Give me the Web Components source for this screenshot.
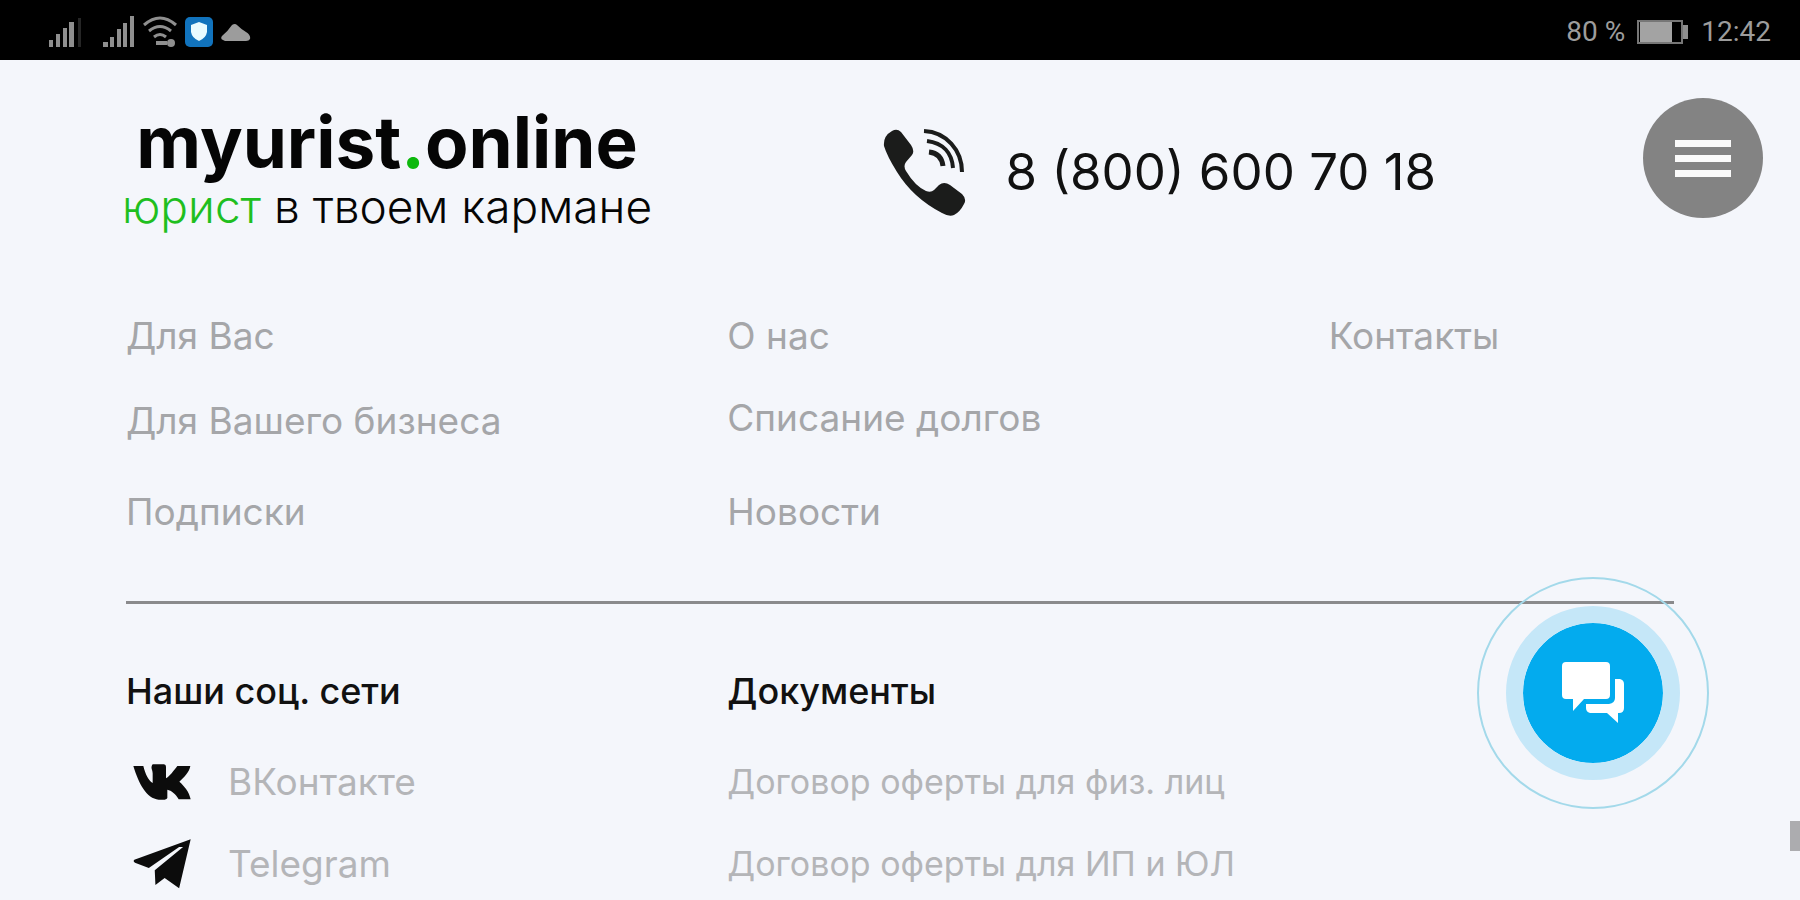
<!DOCTYPE html>
<html lang="ru">
<head>
<meta charset="utf-8">
<meta name="viewport" content="width=device-width, initial-scale=1">
<title>myurist.online</title>
<style>
  body {
    margin: 0;
    min-height: 100vh;
    background: #f4f6fb;
    color: #111;
    font-family: Inter, "Open Sans", sans-serif;
    overflow: hidden;
  }
</style>
</head>
<body>
<status-bar battery="80 %" time="12:42"></status-bar>
<site-header>
  <site-logo slot="logo"></site-logo>
  <phone-link slot="phone" number="8 (800) 600 70 18"></phone-link>
  <menu-button slot="menu"></menu-button>
</site-header>
<site-footer>
  <link-column slot="nav" style="--first-gap: 41px; --second-gap: 47px">
    <text-link href="#you">Для Вас</text-link>
    <text-link href="#business">Для Вашего бизнеса</text-link>
    <text-link href="#plans">Подписки</text-link>
  </link-column>
  <link-column slot="nav" style="--first-gap: 38px; --second-gap: 50px">
    <text-link href="#about">О нас</text-link>
    <text-link href="#debts">Списание долгов</text-link>
    <text-link href="#news">Новости</text-link>
  </link-column>
  <link-column slot="nav">
    <text-link href="#contacts">Контакты</text-link>
  </link-column>

  <link-column slot="info" heading="Наши соц. сети">
    <text-link class="pale" href="#vk" icon="vk">ВКонтакте</text-link>
    <text-link class="pale" href="#telegram" icon="telegram">Telegram</text-link>
  </link-column>
  <link-column slot="info" heading="Документы">
    <text-link class="pale small" href="#offer-person">Договор оферты для физ. лиц</text-link>
    <text-link class="pale small" href="#offer-company">Договор оферты для ИП и ЮЛ</text-link>
  </link-column>
</site-footer>
<chat-button></chat-button>
<scroll-thumb></scroll-thumb>

<script>
class StatusBar extends HTMLElement {
  constructor() {
    super();
    this.attachShadow({ mode: 'open' });
    this.shadowRoot.innerHTML = `
      <style>
        :host {
          display: flex;
          align-items: center;
          justify-content: space-between;
          box-sizing: border-box;
          height: 60px;
          padding: 4px 29px 0 49px;
          background: #000;
          color: #9c9c9c;
          font: 28px/32px Roboto, sans-serif;
        }
        .group { display: flex; align-items: center; }
        .left { gap: 8px; }
        .right { gap: 12px; }
        svg { display: block; }
      </style>
      <div class="group left">
        <svg width="46" height="32" viewBox="0 0 46 32" fill="#8f8f8f">
          <path d="M0 24h4v7H0zM7 18h4v13H7zM14 12h4v19h-4zM20 6h5v25h-5z"/>
          <path d="M29 2h3v29h-3z" fill="#262626"/>
        </svg>
        <svg width="32" height="32" viewBox="0 0 32 32" fill="#8f8f8f">
          <path d="M0 26h5v5H0zM7 21h4v10H7zM14 13h4v18h-4zM20 7h4v24h-4zM27 0h4v31h-4z"/>
        </svg>
        <svg width="34" height="32" viewBox="0 0 34 32" fill="none" stroke="#8f8f8f" stroke-width="3">
          <path d="M1 9Q17-5 33 9M6 15q11-9 22 0M11 21q6-5 12 0"/>
          <path d="M13 27h11" stroke-width="4"/>
          <circle cx="28" cy="27" r="4" fill="#8f8f8f" stroke="none"/>
        </svg>
        <svg width="28" height="32" viewBox="0 0 28 32">
          <rect y="1" width="28" height="30" rx="5" fill="#1173bd"/>
          <path d="M14 6l8 3v7q-1 6-8 9-7-3-8-9V9z" fill="#e9fbff"/>
        </svg>
        <svg width="30" height="32" viewBox="0 0 30 32" fill="#9c9c9c">
          <path d="M2 24q-3-1-1-4Q7 15 11 9q3-2 5 0 4 4 9 7 5 3 4 7-1 2-4 2H4z"/>
        </svg>
      </div>
      <div class="group right">
        <span>${this.getAttribute('battery')}</span>
        <svg width="52" height="24" viewBox="0 0 52 24">
          <rect x="1" y="1" width="44" height="22" fill="none" stroke="#777" stroke-width="2"/>
          <rect x="3" y="2" width="32" height="20" fill="#a3a3a3"/>
          <path d="M46 5h5v14h-5z" fill="#8f8f8f"/>
        </svg>
        <span>${this.getAttribute('time')}</span>
      </div>
    `;
  }
}

class SiteHeader extends HTMLElement {
  constructor() {
    super();
    this.attachShadow({ mode: 'open' });
    this.shadowRoot.innerHTML = `
      <style>
        :host {
          display: grid;
          grid-template-columns: 1fr 1fr auto;
          align-items: start;
          padding: 38px 37px 0 122px;
        }
        .logo { margin-top: 8px; }
        .phone { margin-top: 30px; }
      </style>
      <div class="logo"><slot name="logo"></slot></div>
      <div class="phone"><slot name="phone"></slot></div>
      <slot name="menu"></slot>
    `;
  }
}

class SiteLogo extends HTMLElement {
  constructor() {
    super();
    this.attachShadow({ mode: 'open' });
    this.shadowRoot.innerHTML = `
      <style>
        :host { display: inline-block; }
        a {
          display: flex;
          flex-direction: column;
          align-items: center;
          color: #050505;
          text-decoration: none;
          white-space: nowrap;
        }
        .name { font-size: 71px; line-height: 72px; font-weight: 700; }
        .tagline { font-size: 46px; line-height: 56px; font-weight: 300; }
        .dot { color: #0db80d; }
        .accent { color: #1fbf1f; }
      </style>
      <a href="#home">
        <span class="name">myurist<span class="dot">.</span>online</span>
        <span class="tagline"><span class="accent">юрист</span> в твоем кармане</span>
      </a>
    `;
  }
}

class PhoneLink extends HTMLElement {
  constructor() {
    super();
    this.attachShadow({ mode: 'open' });
    const number = this.getAttribute('number');
    this.shadowRoot.innerHTML = `
      <style>
        :host { display: block; }
        a {
          display: flex;
          align-items: center;
          gap: 40px;
          color: #111;
          font-size: 51px;
          line-height: 60px;
          text-decoration: none;
          white-space: nowrap;
        }
        svg { flex: none; }
      </style>
      <a href="tel:${number.replace(/\D/g, '')}">
        <svg width="83" height="88" viewBox="0 0 83 88">
          <path fill="#1b1c1b" d="M9 3Q14 0 18 4L28 17Q32 23 29 27L23 34Q20 38 23 43Q32 58 43 63Q48 65 51 62L56 57Q61 53 67 57L79 66Q84 71 81 76Q77 84 71 87Q66 89 59 85Q30 70 14 44Q4 28 1 18Q0 8 9 3Z"/>
          <g fill="none" stroke="#1b1c1b" stroke-width="4">
            <path d="M41 3C63 4 79 22 79 44"/>
            <path d="M44 13C60 15 69 25 70 40"/>
            <path d="M46 24C55 25 59 30 60 38" stroke-width="5"/>
          </g>
        </svg>
        <span>${number}</span>
      </a>
    `;
  }
}

class MenuButton extends HTMLElement {
  constructor() {
    super();
    this.attachShadow({ mode: 'open' });
    this.shadowRoot.innerHTML = `
      <style>
        :host { display: block; }
        button {
          display: flex;
          flex-direction: column;
          align-items: center;
          justify-content: center;
          gap: 8px;
          width: 120px;
          height: 120px;
          padding: 0;
          border: 0;
          border-radius: 50%;
          background: #838383;
          cursor: pointer;
        }
        button:hover { background: #707070; }
        span { width: 56px; height: 7px; background: #fafafa; }
      </style>
      <button type="button" aria-label="Меню"><span></span><span></span><span></span></button>
    `;
  }
}

class SiteFooter extends HTMLElement {
  constructor() {
    super();
    this.attachShadow({ mode: 'open' });
    this.shadowRoot.innerHTML = `
      <style>
        :host { display: block; margin: 80px 7% 0; }
        .columns {
          display: grid;
          grid-template-columns: repeat(3, minmax(0, 1fr));
          column-gap: 256px;
        }
        hr {
          height: 3px;
          margin: 67px 0 65px;
          border: 0;
          background: #8a8a8c;
        }
      </style>
      <nav class="columns"><slot name="nav"></slot></nav>
      <hr>
      <div class="columns"><slot name="info"></slot></div>
    `;
  }
}

class LinkColumn extends HTMLElement {
  constructor() {
    super();
    this.attachShadow({ mode: 'open' });
    const heading = this.getAttribute('heading');
    this.shadowRoot.innerHTML = `
      <style>
        :host {
          display: flex;
          flex-direction: column;
          align-items: flex-start;
          white-space: nowrap;
        }
        h2 {
          margin: 0 0 47px;
          font-size: 36px;
          line-height: 44px;
          font-weight: 500;
        }
        ::slotted(:nth-child(2)) { margin-top: var(--first-gap, 38px); }
        ::slotted(:nth-child(3)) { margin-top: var(--second-gap, 38px); }
      </style>
      ${heading ? `<h2>${heading}</h2>` : ''}
      <slot></slot>
    `;
  }
}

const ICONS = {
  vk: `<svg width="58" height="36" viewBox="99 312 174 106" preserveAspectRatio="none">
    <path d="M100 318H130C136 342 146 362 158 368V340C158 328 150 324 158 313H192Q198 314 198 320V354C208 350 222 330 232 318H271C268 336 252 352 238 364C252 376 268 394 272 416H236C228 402 214 390 202 388V412Q201 416 194 417H176C140 414 116 370 100 318Z"/></svg>`,
  telegram: `<svg width="58" height="50" viewBox="98 542 176 150" preserveAspectRatio="none">
    <path d="M273 543L102 604Q97 609 104 613L146 629L238 566L250 566L164 636L166 680L194 659L238 690Z"/></svg>`
};

class TextLink extends HTMLElement {
  constructor() {
    super();
    this.attachShadow({ mode: 'open' });
    const icon = ICONS[this.getAttribute('icon')] || '';
    this.shadowRoot.innerHTML = `
      <style>
        :host { display: block; --ink: #a5a6a9; font-size: 37px; line-height: 44px; }
        :host(.pale) { --ink: #b4b5b8; }
        :host(.small) { font-size: 34px; }
        :host([icon]) { padding-left: 7px; }
        a {
          display: flex;
          align-items: center;
          gap: 37px;
          height: 44px;
          color: var(--ink);
          text-decoration: none;
        }
        a:hover { color: #111; }
        svg { flex: none; fill: #0c0c0c; }
      </style>
      <a href="${this.getAttribute('href')}">${icon}<span><slot></slot></span></a>
    `;
  }
}

class ChatButton extends HTMLElement {
  constructor() {
    super();
    this.attachShadow({ mode: 'open' });
    this.shadowRoot.innerHTML = `
      <style>
        :host {
          position: fixed;
          right: 91px;
          bottom: 91px;
          display: grid;
          place-items: center;
          box-sizing: border-box;
          width: 232px;
          height: 232px;
          border: 2px solid #a3d9ea;
          border-radius: 50%;
        }
        button {
          display: grid;
          place-items: center;
          box-sizing: content-box;
          width: 140px;
          height: 140px;
          padding: 0;
          border: 17px solid #c5e7f8;
          border-radius: 50%;
          background: #03abee;
          background-clip: padding-box;
          cursor: pointer;
        }
      </style>
      <button type="button" aria-label="Чат">
        <svg width="62" height="62" viewBox="0 0 62 62" fill="#fff">
          <path d="M4 0H44Q48 0 48 4V33Q48 37 44 37H22L11 49V37H4Q0 37 0 33V4Q0 0 4 0Z"/>
          <path d="M53 17H58Q62 18 62 22V46Q62 51 57 51H56V61L45 51H28Q24 50 24 46V42H47Q53 41 53 36Z"/>
        </svg>
      </button>
    `;
  }
}

class ScrollThumb extends HTMLElement {
  constructor() {
    super();
    this.attachShadow({ mode: 'open' });
    this.shadowRoot.innerHTML = `
      <style>
        :host {
          position: fixed;
          right: 0;
          bottom: 49px;
          width: 10px;
          height: 30px;
          background: #acacaf;
        }
      </style>
    `;
  }
}

customElements.define('status-bar', StatusBar);
customElements.define('site-header', SiteHeader);
customElements.define('site-logo', SiteLogo);
customElements.define('phone-link', PhoneLink);
customElements.define('menu-button', MenuButton);
customElements.define('site-footer', SiteFooter);
customElements.define('link-column', LinkColumn);
customElements.define('text-link', TextLink);
customElements.define('chat-button', ChatButton);
customElements.define('scroll-thumb', ScrollThumb);
</script>
</body>
</html>
